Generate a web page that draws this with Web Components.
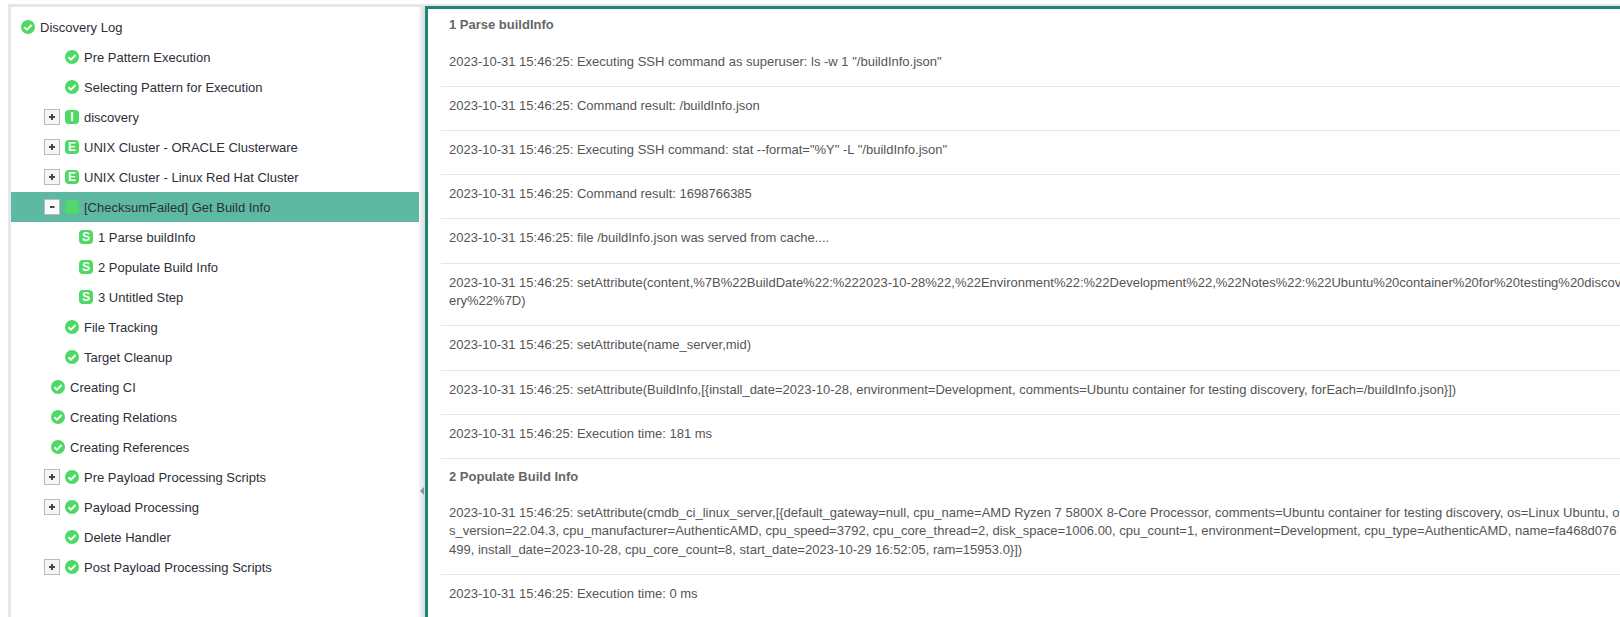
<!DOCTYPE html>
<html>
<head>
<meta charset="utf-8">
<title>Discovery Log</title>
<style>
	html, body { margin: 0; padding: 0; height: 100%; overflow: hidden; background: #fff; }
	body { font-family: "Liberation Sans", Arial, sans-serif; font-size: 13px; }
</style>
</head>
<body>
<discovery-layout>
	<tree-panel slot="tree">
		<tree-row icon="check" indent="10">Discovery Log</tree-row>
		<tree-row icon="check" indent="54">Pre Pattern Execution</tree-row>
		<tree-row icon="check" indent="54">Selecting Pattern for Execution</tree-row>
		<tree-row icon="I" indent="54" toggle="+">discovery</tree-row>
		<tree-row icon="E" indent="54" toggle="+">UNIX Cluster - ORACLE Clusterware</tree-row>
		<tree-row icon="E" indent="54" toggle="+">UNIX Cluster - Linux Red Hat Cluster</tree-row>
		<tree-row icon="E" indent="54" toggle="-" selected>[ChecksumFailed] Get Build Info</tree-row>
		<tree-row icon="S" indent="68">1 Parse buildInfo</tree-row>
		<tree-row icon="S" indent="68">2 Populate Build Info</tree-row>
		<tree-row icon="S" indent="68">3 Untitled Step</tree-row>
		<tree-row icon="check" indent="54">File Tracking</tree-row>
		<tree-row icon="check" indent="54">Target Cleanup</tree-row>
		<tree-row icon="check" indent="40">Creating CI</tree-row>
		<tree-row icon="check" indent="40">Creating Relations</tree-row>
		<tree-row icon="check" indent="40">Creating References</tree-row>
		<tree-row icon="check" indent="54" toggle="+">Pre Payload Processing Scripts</tree-row>
		<tree-row icon="check" indent="54" toggle="+">Payload Processing</tree-row>
		<tree-row icon="check" indent="54">Delete Handler</tree-row>
		<tree-row icon="check" indent="54" toggle="+">Post Payload Processing Scripts</tree-row>
	</tree-panel>
	<log-panel slot="log">
		<log-section heading="1 Parse buildInfo">
			<log-line>2023-10-31 15:46:25: Executing SSH command as superuser: ls -w 1 "/buildInfo.json"</log-line>
			<log-line>2023-10-31 15:46:25: Command result: /buildInfo.json</log-line>
			<log-line>2023-10-31 15:46:25: Executing SSH command: stat --format="%Y" -L "/buildInfo.json"</log-line>
			<log-line>2023-10-31 15:46:25: Command result: 1698766385</log-line>
			<log-line>2023-10-31 15:46:25: file /buildInfo.json was served from cache....</log-line>
			<log-line>2023-10-31 15:46:25: setAttribute(content,%7B%22BuildDate%22:%222023-10-28%22,%22Environment%22:%22Development%22,%22Notes%22:%22Ubuntu%20container%20for%20testing%20discovery%22%7D)</log-line>
			<log-line>2023-10-31 15:46:25: setAttribute(name_server,mid)</log-line>
			<log-line>2023-10-31 15:46:25: setAttribute(BuildInfo,[{install_date=2023-10-28, environment=Development, comments=Ubuntu container for testing discovery, forEach=/buildInfo.json}])</log-line>
			<log-line>2023-10-31 15:46:25: Execution time: 181 ms</log-line>
		</log-section>
		<log-section heading="2 Populate Build Info">
			<log-line>2023-10-31 15:46:25: setAttribute(cmdb_ci_linux_server,[{default_gateway=null, cpu_name=AMD Ryzen 7 5800X 8-Core Processor, comments=Ubuntu container for testing discovery, os=Linux Ubuntu, os_version=22.04.3, cpu_manufacturer=AuthenticAMD, cpu_speed=3792, cpu_core_thread=2, disk_space=1006.00, cpu_count=1, environment=Development, cpu_type=AuthenticAMD, name=fa468d076499, install_date=2023-10-28, cpu_core_count=8, start_date=2023-10-29 16:52:05, ram=15953.0}])</log-line>
			<log-line>2023-10-31 15:46:25: Execution time: 0 ms</log-line>
		</log-section>
	</log-panel>
</discovery-layout>

<script>
class DiscoveryLayout extends HTMLElement {
	constructor() {
		super();
		this.attachShadow({ mode: "open" });
		this.shadowRoot.innerHTML = `
			<style>
				:host {
					display: block;
					height: 617px;
					box-sizing: border-box;
					padding: 4px 0 0 8px;
					overflow: hidden;
				}
				#frame {
					display: flex;
					height: 100%;
					background: #e4e8eb;
					padding-left: 3px;
				}
				#left {
					flex: 0 0 408px;
					margin-top: 3px;
					background: #fff;
					overflow: hidden;
				}
				#split {
					flex: 0 0 6px;
					margin-top: 3px;
					box-sizing: border-box;
					padding: 480px 0 0 1px;
					background: linear-gradient(to right, #f6f7f7, #d9dcde);
				}
				#arrow {
					width: 0;
					height: 0;
					border: 4px solid transparent;
					border-left-width: 0;
					border-right: 4px solid #8f9396;
				}
				#right {
					flex: 1 1 0;
					min-width: 0;
					margin-top: 2px;
				}
			</style>
			<div id="frame">
				<div id="left"><slot name="tree"></slot></div>
				<div id="split"><div id="arrow"></div></div>
				<div id="right"><slot name="log"></slot></div>
			</div>
		`;
	}
}

class TreePanel extends HTMLElement {
	constructor() {
		super();
		this.attachShadow({ mode: "open" });
		this.shadowRoot.innerHTML = `
			<style>
				:host {
					display: flex;
					flex-direction: column;
					padding-top: 5px;
					color: #2e2e38;
					font-size: 13px;
				}
			</style>
			<slot></slot>
		`;
	}
}

class TreeRow extends HTMLElement {
	constructor() {
		super();
		this.attachShadow({ mode: "open" });
		const icon = this.getAttribute("icon");
		const toggle = this.getAttribute("toggle");
		const indent = Number(this.getAttribute("indent")) - (toggle ? 21 : 0);
		const glyph = icon === "check"
			? `<svg width="14" height="14" viewBox="0 0 14 14"><circle cx="7" cy="7" r="7" fill="#4cd964"/><path d="M3.4 7.2 5.9 9.6 10.6 5" fill="none" stroke="#fff" stroke-width="2"/></svg>`
			: `<span id="badge">${icon}</span>`;
		const sign = toggle === "+" ? "M1 4H7M4 1V7" : "M2 4H6.5";
		this.shadowRoot.innerHTML = `
			<style>
				:host {
					display: flex;
					align-items: center;
					height: 30px;
					padding-left: ${indent}px;
				}
				:host([selected]) {
					background: #5eb9a3;
				}
				#toggle {
					box-sizing: border-box;
					width: 16px;
					height: 16px;
					margin-right: 5px;
					display: flex;
					align-items: center;
					justify-content: center;
					background: #f4f5f5;
					border: 1px solid #b9bcbe;
				}
				:host([selected]) #toggle {
					background: #f8f8f8;
				}
				#icon {
					flex: 0 0 14px;
					height: 14px;
					margin-right: 5px;
					display: flex;
				}
				#badge {
					width: 14px;
					height: 14px;
					border-radius: 4px;
					background: #4cd964;
					color: #fff;
					font: bold 12px/14px "Liberation Sans", sans-serif;
					text-align: center;
				}
				:host([selected]) #badge {
					color: #62cf85;
				}
				#label {
					white-space: nowrap;
				}
			</style>
			${toggle ? `<span id="toggle"><svg width="8" height="8" viewBox="0 0 8 8"><path d="${sign}" stroke="#44464e" stroke-width="2" fill="none"/></svg></span>` : ""}
			<span id="icon">${glyph}</span>
			<span id="label"><slot></slot></span>
		`;
	}
}

class LogPanel extends HTMLElement {
	constructor() {
		super();
		this.attachShadow({ mode: "open" });
		this.shadowRoot.innerHTML = `
			<style>
				:host {
					display: block;
					height: 100%;
					box-sizing: border-box;
					background: #fff;
					border-top: 3px solid #1f8574;
					border-left: 3px solid #1f8574;
					padding-left: 13px;
					color: #555;
					font-size: 13px;
					line-height: 18.57px;
					overflow: hidden;
				}
			</style>
			<slot></slot>
		`;
	}
}

class LogSection extends HTMLElement {
	constructor() {
		super();
		this.attachShadow({ mode: "open" });
		this.shadowRoot.innerHTML = `
			<style>
				:host { display: block; }
				#heading {
					padding: 9px 8px 7.4px;
					font-weight: bold;
					color: #666;
				}
				:host(:first-of-type) #heading {
					padding: 6.7px 8px 8.4px;
				}
			</style>
			<div id="heading">${this.getAttribute("heading")}</div>
			<slot></slot>
		`;
	}
}

class LogLine extends HTMLElement {
	constructor() {
		super();
		this.attachShadow({ mode: "open" });
		this.shadowRoot.innerHTML = `
			<style>
				:host {
					display: block;
					margin-right: -2px;
					padding: 10px 0 14.63px 8px;
					border-bottom: 1px solid #e6e6e6;
					word-break: break-all;
				}
			</style>
			<slot></slot>
		`;
	}
}

customElements.define("discovery-layout", DiscoveryLayout);
customElements.define("tree-panel", TreePanel);
customElements.define("tree-row", TreeRow);
customElements.define("log-panel", LogPanel);
customElements.define("log-section", LogSection);
customElements.define("log-line", LogLine);
</script>
</body>
</html>
